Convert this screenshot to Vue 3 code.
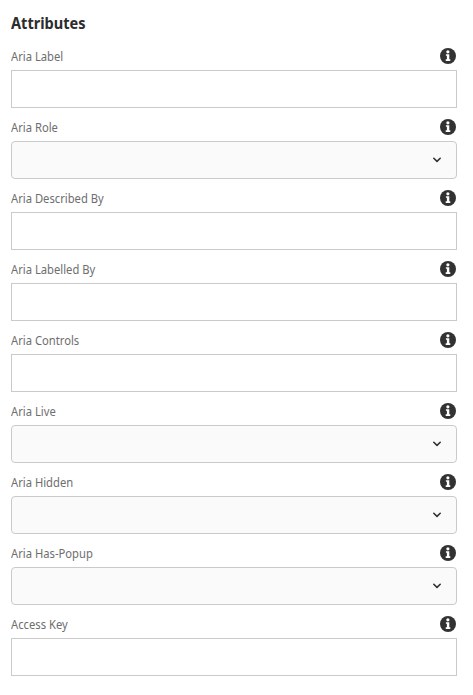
<script setup>
const fields = [
  { label: 'Aria Label', type: 'text' },
  { label: 'Aria Role', type: 'select' },
  { label: 'Aria Described By', type: 'text' },
  { label: 'Aria Labelled By', type: 'text' },
  { label: 'Aria Controls', type: 'text' },
  { label: 'Aria Live', type: 'select' },
  { label: 'Aria Hidden', type: 'select' },
  { label: 'Aria Has-Popup', type: 'select' },
  { label: 'Access Key', type: 'text' },
]
</script>

<template>
  <section class="attributes">
    <h3 class="title">Attributes</h3>
    <div v-for="field in fields" :key="field.label" class="field">
      <div class="head">
        <label class="label">{{ field.label }}</label>
        <svg class="info" viewBox="0 0 16 16" width="16" height="16">
          <circle cx="8" cy="8" r="8" fill="#323232" />
          <circle cx="7.9" cy="3.8" r="1.6" fill="#fff" />
          <path d="M5.9 6.3h3.4v5h1v1.6H5.7v-1.6h1.2V7.8h-1z" fill="#fff" />
        </svg>
      </div>
      <input v-if="field.type === 'text'" class="control" type="text" />
      <button v-else class="control select" type="button">
        <svg class="chevron" viewBox="0 0 10 6" width="10" height="6">
          <path d="M1.8 1.3 5 4.4 8.2 1.3" fill="none" stroke="#323232" stroke-width="1.6" stroke-linecap="round" stroke-linejoin="round" />
        </svg>
      </button>
    </div>
  </section>
</template>

<style>
body {
  background: #fff;
}
</style>

<style scoped>
.attributes {
  box-sizing: border-box;
  width: 473px;
  height: 695px;
  padding: 9px 16px 0 11px;
  font-family: "Noto Sans", "Open Sans", sans-serif;
}
.title {
  height: 28px;
  margin: 0;
  font-size: 16px;
  line-height: 28px;
  font-weight: 700;
  color: #2c2c2c;
  transform: scaleX(0.91);
  transform-origin: left;
}
.field {
  height: 71px;
}
.head {
  display: flex;
  justify-content: space-between;
  align-items: center;
  height: 33px;
  padding: 0 1px 0 0;
}
.label {
  height: 18px;
  margin-top: 7px;
  font-size: 12px;
  line-height: 18px;
  color: #6e6e6e;
  transform: scaleX(0.935);
  transform-origin: left;
}
.info {
  margin-top: 5px;
}
.control {
  box-sizing: border-box;
  display: flex;
  align-items: center;
  justify-content: flex-end;
  width: 100%;
  height: 38px;
  margin: 0;
  padding: 0 14px;
  border: 1px solid #cacaca;
  border-radius: 0;
  background: #fff;
  outline: none;
}
.select {
  border-radius: 4px;
  background: #fafafa;
}
</style>
